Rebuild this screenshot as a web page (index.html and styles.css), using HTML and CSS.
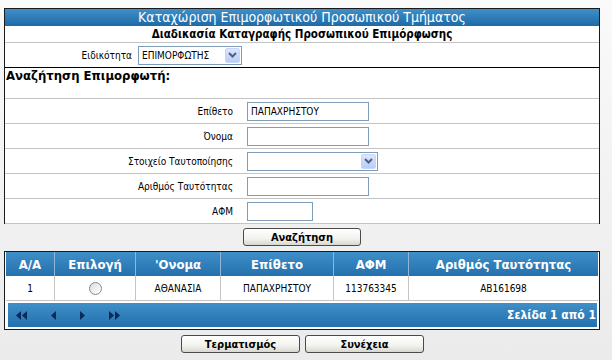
FILE: index.html
```html
<!DOCTYPE html>
<html lang="el">
<head>
    <meta charset="UTF-8">
    <title>Καταχώριση Επιμορφωτικού Προσωπικού</title>
    <link rel="stylesheet" href="styles.css">
</head>
<body>

    <div class="panel">
        <div class="panel-title">Καταχώριση Επιμορφωτικού Προσωπικού Τμήματος</div>
        <div class="panel-sub">Διαδικασία Καταγραφής Προσωπικού Επιμόρφωσης</div>

        <div class="spec-row">
            <span class="spec-label">Ειδικότητα</span>
            <div class="select spec-select">
                <span class="select-text">ΕΠΙΜΟΡΦΩΤΗΣ</span>
                <span class="select-arrow">
                    <svg width="9" height="6" viewBox="0 0 9 6"><path d="M1 1 L4.5 4.5 L8 1" fill="none" stroke="#4d6185" stroke-width="2"/></svg>
                </span>
            </div>
        </div>

        <div class="search-title">Αναζήτηση Επιμορφωτή:</div>

        <div class="field-row">
            <span class="field-label">Επίθετο</span>
            <div class="input input-wide">ΠΑΠΑΧΡΗΣΤΟΥ</div>
        </div>
        <div class="field-row">
            <span class="field-label">Όνομα</span>
            <div class="input input-wide"></div>
        </div>
        <div class="field-row">
            <span class="field-label">Στοιχείο Ταυτοποίησης</span>
            <div class="select id-select">
                <span class="select-text"></span>
                <span class="select-arrow">
                    <svg width="9" height="6" viewBox="0 0 9 6"><path d="M1 1 L4.5 4.5 L8 1" fill="none" stroke="#4d6185" stroke-width="2"/></svg>
                </span>
            </div>
        </div>
        <div class="field-row">
            <span class="field-label">Αριθμός Ταυτότητας</span>
            <div class="input input-wide"></div>
        </div>
        <div class="field-row last">
            <span class="field-label">ΑΦΜ</span>
            <div class="input input-short"></div>
        </div>
    </div>

    <div class="search-bar">
        <button class="btn btn-search">Αναζήτηση</button>
    </div>

    <div class="grid">
        <table class="grid-table">
            <thead>
                <tr>
                    <th class="c-aa">A/A</th>
                    <th class="c-sel">Επιλογή</th>
                    <th class="c-name">'Ονομα</th>
                    <th class="c-surname">Επίθετο</th>
                    <th class="c-afm">ΑΦΜ</th>
                    <th class="c-id">Αριθμός Ταυτότητας</th>
                </tr>
            </thead>
            <tbody>
                <tr>
                    <td>1</td>
                    <td><span class="radio"></span></td>
                    <td>ΑΘΑΝΑΣΙΑ</td>
                    <td>ΠΑΠΑΧΡΗΣΤΟΥ</td>
                    <td>113763345</td>
                    <td>AB161698</td>
                </tr>
            </tbody>
        </table>
        <div class="pager">
            <div class="pager-nav">
                <svg width="11" height="9" viewBox="0 0 11 9"><path d="M5 0 L0 4.5 L5 9 Z M11 0 L6 4.5 L11 9 Z" fill="#0b2a57"/></svg>
                <svg width="5" height="9" viewBox="0 0 5 9"><path d="M5 0 L0 4.5 L5 9 Z" fill="#0b2a57"/></svg>
                <svg width="5" height="9" viewBox="0 0 5 9"><path d="M0 0 L5 4.5 L0 9 Z" fill="#0b2a57"/></svg>
                <svg width="11" height="9" viewBox="0 0 11 9"><path d="M0 0 L5 4.5 L0 9 Z M6 0 L11 4.5 L6 9 Z" fill="#0b2a57"/></svg>
            </div>
            <span class="pager-info">Σελίδα 1 από 1</span>
        </div>
    </div>

    <div class="actions">
        <button class="btn btn-action">Τερματισμός</button>
        <button class="btn btn-action">Συνέχεια</button>
    </div>

</body>
</html>
```

FILE: styles.css
```css
/* Γενικά */
body {
    margin: 0;
    padding: 8px 0 0 4px;
    width: 596px;
    font-family: "DejaVu Sans Condensed", "DejaVu Sans", sans-serif;
    font-size: 10px;
    color: #000;
    background: linear-gradient(#fafafa, #ebebeb);
    min-height: 352px;
}

/* Πλαίσιο φόρμας */
.panel {
    background: #fff;
    border: 1px solid #1a1a1a;
    border-bottom: none;
}

.panel-title {
    height: 17px;
    line-height: 17px;
    text-align: center;
    color: #fff;
    font-size: 14px;
    background: linear-gradient(#3f8fc8, #1d6aa8);
}

.panel-sub {
    height: 16px;
    line-height: 16px;
    text-align: center;
    font-weight: bold;
    font-size: 11.5px;
    border-bottom: 1px solid #c4c4c4;
}

.spec-row {
    display: flex;
    align-items: center;
    height: 24px;
    border-bottom: 1px solid #000;
}

.spec-label {
    width: 127px;
    text-align: right;
    margin-right: 6px;
}

.search-title {
    height: 30px;
    padding-left: 1px;
    font-weight: bold;
    font-size: 13px;
    line-height: 16px;
    border-bottom: 1px solid #c4c4c4;
}

.field-row {
    display: flex;
    align-items: center;
    height: 24px;
    border-bottom: 1px solid #c4c4c4;
}

.field-label {
    width: 228px;
    text-align: right;
    margin-right: 14px;
}

/* Πεδία */
.input, .select {
    box-sizing: border-box;
    height: 19px;
    border: 1px solid #7f9db9;
    background: #fff;
    font-size: 10px;
    line-height: 17px;
    padding-left: 3px;
}

.input-wide { width: 122px; }
.input-short { width: 66px; }

.select {
    display: flex;
    align-items: center;
    justify-content: space-between;
    padding-right: 1px;
}

.spec-select { width: 104px; }
.id-select { width: 131px; }

.select-arrow {
    display: flex;
    align-items: center;
    justify-content: center;
    width: 15px;
    height: 15px;
    background: linear-gradient(#dbe6fd, #b9cdf8);
    border: 1px solid #c7d6f7;
    border-radius: 2px;
    box-sizing: border-box;
}

/* Κουμπιά */
.btn {
    box-sizing: border-box;
    height: 18px;
    padding: 0;
    border: 1px solid #4a4a4a;
    border-radius: 3px;
    background: linear-gradient(#ffffff, #f2f2ee 60%, #d8d8d2);
    font-family: inherit;
    font-weight: bold;
    font-size: 11px;
    color: #000;
}

.search-bar {
    display: flex;
    padding: 4px 0 5px 239px;
}

.btn-search { width: 118px; }

/* Πίνακας αποτελεσμάτων */
.grid {
    border: 1px solid #1a1a1a;
    background: #fff;
    padding: 0 1px 2px 1px;
}

.grid-table {
    width: 100%;
    border-collapse: collapse;
}

.grid-table th {
    height: 24px;
    padding: 0;
    color: #fff;
    font-size: 13px;
    font-weight: bold;
    background: linear-gradient(#3f8fc8, #2470ad);
    border-left: 1px solid #8fb6d9;
}

.grid-table th:first-child { border-left: none; }

.grid-table td {
    height: 24px;
    padding: 0;
    text-align: center;
    border-left: 1px solid #c4c4c4;
    border-bottom: 1px solid #c4c4c4;
}

.grid-table td:first-child { border-left: none; }

.c-aa { width: 48px; }
.c-sel { width: 80px; }
.c-name { width: 84px; }
.c-surname { width: 112px; }
.c-afm { width: 74px; }

.radio {
    display: inline-block;
    width: 11px;
    height: 11px;
    border: 1px solid #7d8a99;
    border-radius: 50%;
    background: linear-gradient(135deg, #dcdcd8, #fff);
    vertical-align: middle;
}

.pager {
    display: flex;
    align-items: center;
    justify-content: space-between;
    height: 24px;
    margin: 2px 1px 0 2px;
    background: linear-gradient(#3f8fc8, #2470ad);
}

.pager-nav {
    display: flex;
    align-items: center;
    gap: 24px;
    padding-left: 8px;
}

.pager-info {
    color: #fff;
    font-weight: bold;
    font-size: 12px;
    padding-right: 1px;
}

/* Κουμπιά ενεργειών */
.actions {
    display: flex;
    gap: 5px;
    padding: 5px 0 0 177px;
}

.btn-action { width: 119px; }
```
